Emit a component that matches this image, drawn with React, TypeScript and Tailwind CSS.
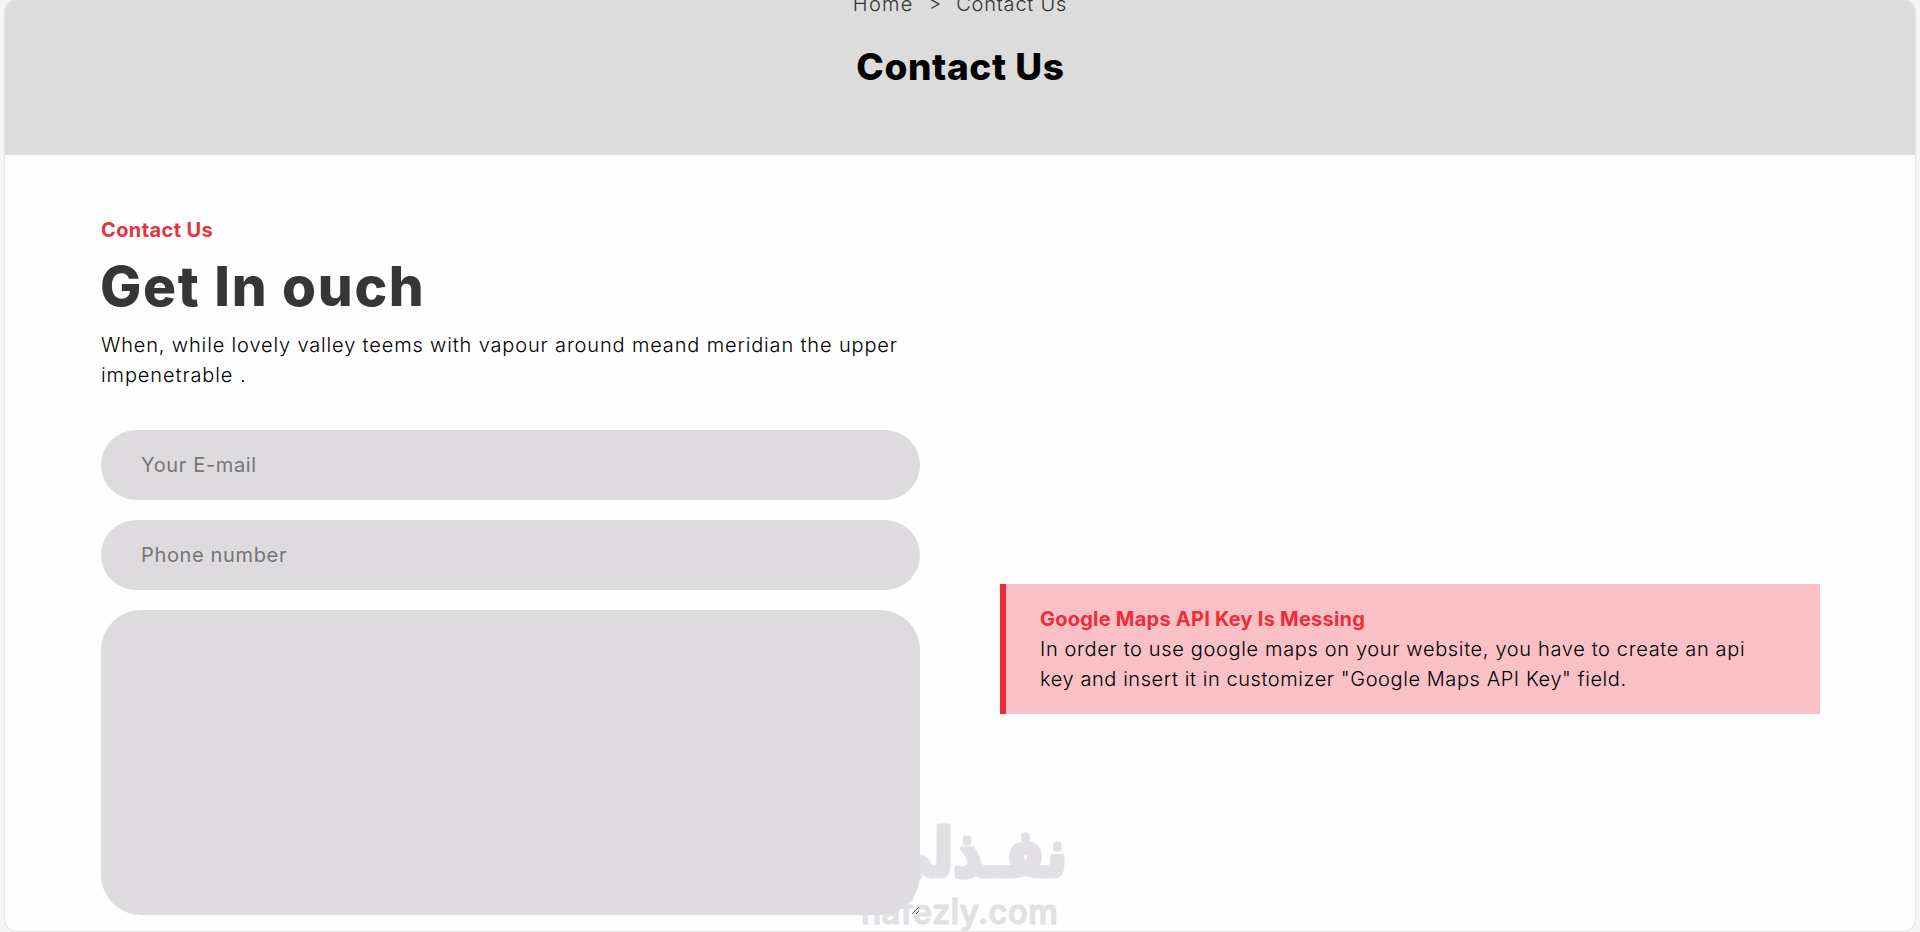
import type { ReactNode } from 'react';

type FieldProps = {
  type: string;
  placeholder: string;
};

const Field = ({ type, placeholder }: FieldProps) => (
  <input
    type={type}
    placeholder={placeholder}
    className="block h-[70px] w-full rounded-[35px] bg-[#dddbde] px-10 text-[20px] tracking-[0.65px] text-[#333] outline-none placeholder:text-[#757575] placeholder:opacity-100"
  />
);

const Alert = ({ title, children }: { title: string; children: ReactNode }) => (
  <div className="h-[130px] border-l-[6px] border-[#ef2d38] bg-[#f9c0c6] pt-5 pl-[34px] leading-[30px]">
    <h4 className="text-[20px] font-bold tracking-[0.23px] text-[#ef2d38]">{title}</h4>
    {children}
  </div>
);

const Watermark = () => (
  <svg className="pointer-events-none absolute bottom-0 left-[850px]" width="230" height="122" viewBox="850 810 230 122" fill="#e2e0e4" stroke="#e2e0e4" strokeLinejoin="round">
    <text x="875" y="876" textLength="192" lengthAdjust="spacingAndGlyphs" fontFamily="DejaVu Sans, sans-serif" fontWeight="700" fontSize="66" strokeWidth="5">
      نفـذلي
    </text>
    <text x="861" y="924" textLength="197" lengthAdjust="spacingAndGlyphs" fontFamily="Inter, sans-serif" fontWeight="600" fontSize="35" strokeWidth="0.8">
      nafezly.com
    </text>
  </svg>
);

export const App = () => {
  return (
    <div className="relative h-[932px] overflow-hidden bg-[#f5f4f6] px-[5px] font-[Inter,sans-serif] text-[20px] text-black">
      <div className="h-[931px] overflow-hidden rounded-xl bg-[#fefefe] shadow-[0_0_2px_#bbb]">
        <header className="flex h-[155px] flex-col items-center bg-[#dcdcdc]">
          <nav className="-mt-[11px] flex h-[30px] items-center font-light text-[#333]">
            <span className="tracking-[1.3px]">Home</span>
            <span className="mx-[15px] text-[19px]">&gt;</span>
            <span className="tracking-[0.8px]">Contact Us</span>
          </nav>
          <h1 className="mt-5 pl-px text-[37px] leading-[56px] font-extrabold tracking-[0.6px] text-black">Contact Us</h1>
        </header>

        <main className="grid grid-cols-[819px_820px] gap-20 pl-24">
          <section className="pt-[60px]">
            <p className="leading-[30px] font-bold tracking-[0.4px] text-[#e2333f]">Contact Us</p>
            <h2 className="mt-1 -ml-px text-[55px] leading-[74px] font-extrabold tracking-[1.7px] text-[#373538]">Get In ouch</h2>
            <p className="mt-[7px] leading-[30px] font-light">
              <span className="block tracking-[0.85px] whitespace-nowrap">
                When, while lovely valley teems with vapour around meand meridian the upper
              </span>
              <span className="block tracking-[0.9px]">impenetrable .</span>
            </p>
            <form className="relative z-10 mt-10 space-y-5">
              <Field type="email" placeholder="Your E-mail" />
              <Field type="tel" placeholder="Phone number" />
              <textarea className="block h-[305px] w-full resize rounded-[40px] bg-[#dddbde] px-10 py-5 outline-none" />
            </form>
          </section>

          <section className="pt-[429px]">
            <Alert title="Google Maps API Key Is Messing">
              <p className="font-light whitespace-nowrap">
                <span className="block tracking-[0.65px]">In order to use google maps on your website, you have to create an api</span>
                <span className="block tracking-[0.58px]">key and insert it in customizer "Google Maps API Key" field.</span>
              </p>
            </Alert>
          </section>
        </main>
      </div>
      <Watermark />
    </div>
  );
};

export default App;
